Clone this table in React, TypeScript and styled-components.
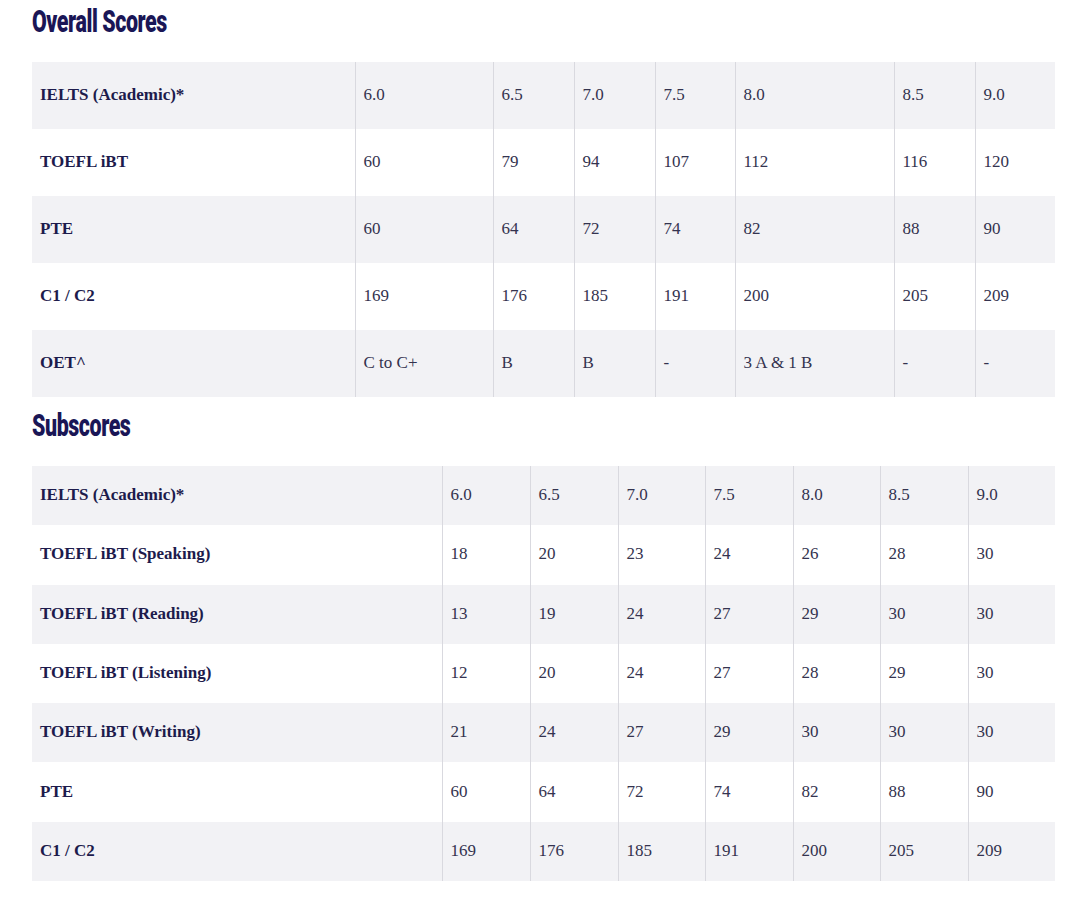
import React from "react";
import styled, { createGlobalStyle } from "styled-components";

const Global = createGlobalStyle`
  html, body { margin: 0; padding: 0; background: #ffffff; }
  body { font-family: "Liberation Serif", "Times New Roman", serif; }
`;

const Page = styled.main`
  padding: 4px 25px 0 32px;
  width: 1023px;
`;

const Heading = styled.h2<{ $top: number }>`
  display: inline-block;
  margin: ${(p) => p.$top}px 0 22px 0;
  font-family: Roboto, "Liberation Sans", sans-serif;
  font-weight: 900;
  font-size: 31px;
  line-height: 36px;
  letter-spacing: -0.6px;
  color: #1a1656;
  transform: scaleX(0.69);
  transform-origin: left center;
  white-space: nowrap;
`;

const HeadWrap = styled.div``;

const Table = styled.table`
  width: 1023px;
  border-collapse: collapse;
  table-layout: fixed;
  border-spacing: 0;
`;

const Col = styled.col<{ $w: number }>`
  width: ${(p) => p.$w}px;
`;

const Row = styled.tr<{ $h: number }>`
  height: ${(p) => p.$h}px;
  &:nth-child(odd) {
    background: #f2f2f5;
  }
`;

const Label = styled.td`
  padding: 0 8px 1px;
  font-weight: 700;
  font-size: 17px;
  color: #1d1b4c;
  vertical-align: middle;
  white-space: nowrap;
`;

const Cell = styled.td`
  padding: 0 8px 1px;
  font-size: 17px;
  color: #34334f;
  vertical-align: middle;
  border-left: 1px solid #d9d9df;
  white-space: nowrap;
`;

type TableData = { cols: number[]; rowH: number; rows: string[][] };

const overall: TableData = {
  cols: [323, 138, 81, 81, 80, 159, 81, 80],
  rowH: 67,
  rows: [
    ["IELTS (Academic)*", "6.0", "6.5", "7.0", "7.5", "8.0", "8.5", "9.0"],
    ["TOEFL iBT", "60", "79", "94", "107", "112", "116", "120"],
    ["PTE", "60", "64", "72", "74", "82", "88", "90"],
    ["C1 / C2", "169", "176", "185", "191", "200", "205", "209"],
    ["OET^", "C to C+", "B", "B", "-", "3 A & 1 B", "-", "-"],
  ],
};

const subs: TableData = {
  cols: [410, 88, 88, 87, 88, 87, 88, 87],
  rowH: 59.3,
  rows: [
    ["IELTS (Academic)*", "6.0", "6.5", "7.0", "7.5", "8.0", "8.5", "9.0"],
    ["TOEFL iBT (Speaking)", "18", "20", "23", "24", "26", "28", "30"],
    ["TOEFL iBT (Reading)", "13", "19", "24", "27", "29", "30", "30"],
    ["TOEFL iBT (Listening)", "12", "20", "24", "27", "28", "29", "30"],
    ["TOEFL iBT (Writing)", "21", "24", "27", "29", "30", "30", "30"],
    ["PTE", "60", "64", "72", "74", "82", "88", "90"],
    ["C1 / C2", "169", "176", "185", "191", "200", "205", "209"],
  ],
};

function ScoreTable({ data }: { data: TableData }) {
  return (
    <Table>
      <colgroup>
        {data.cols.map((w, i) => (
          <Col key={i} $w={w} />
        ))}
      </colgroup>
      <tbody>
        {data.rows.map((r, i) => (
          <Row key={i} $h={data.rowH}>
            <Label>{r[0]}</Label>
            {r.slice(1).map((v, j) => (
              <Cell key={j}>{v}</Cell>
            ))}
          </Row>
        ))}
      </tbody>
    </Table>
  );
}

export default function App() {
  return (
    <>
      <Global />
      <Page>
        <HeadWrap>
          <Heading $top={0}>Overall Scores</Heading>
        </HeadWrap>
        <ScoreTable data={overall} />
        <HeadWrap>
          <Heading $top={11}>Subscores</Heading>
        </HeadWrap>
        <ScoreTable data={subs} />
      </Page>
    </>
  );
}
